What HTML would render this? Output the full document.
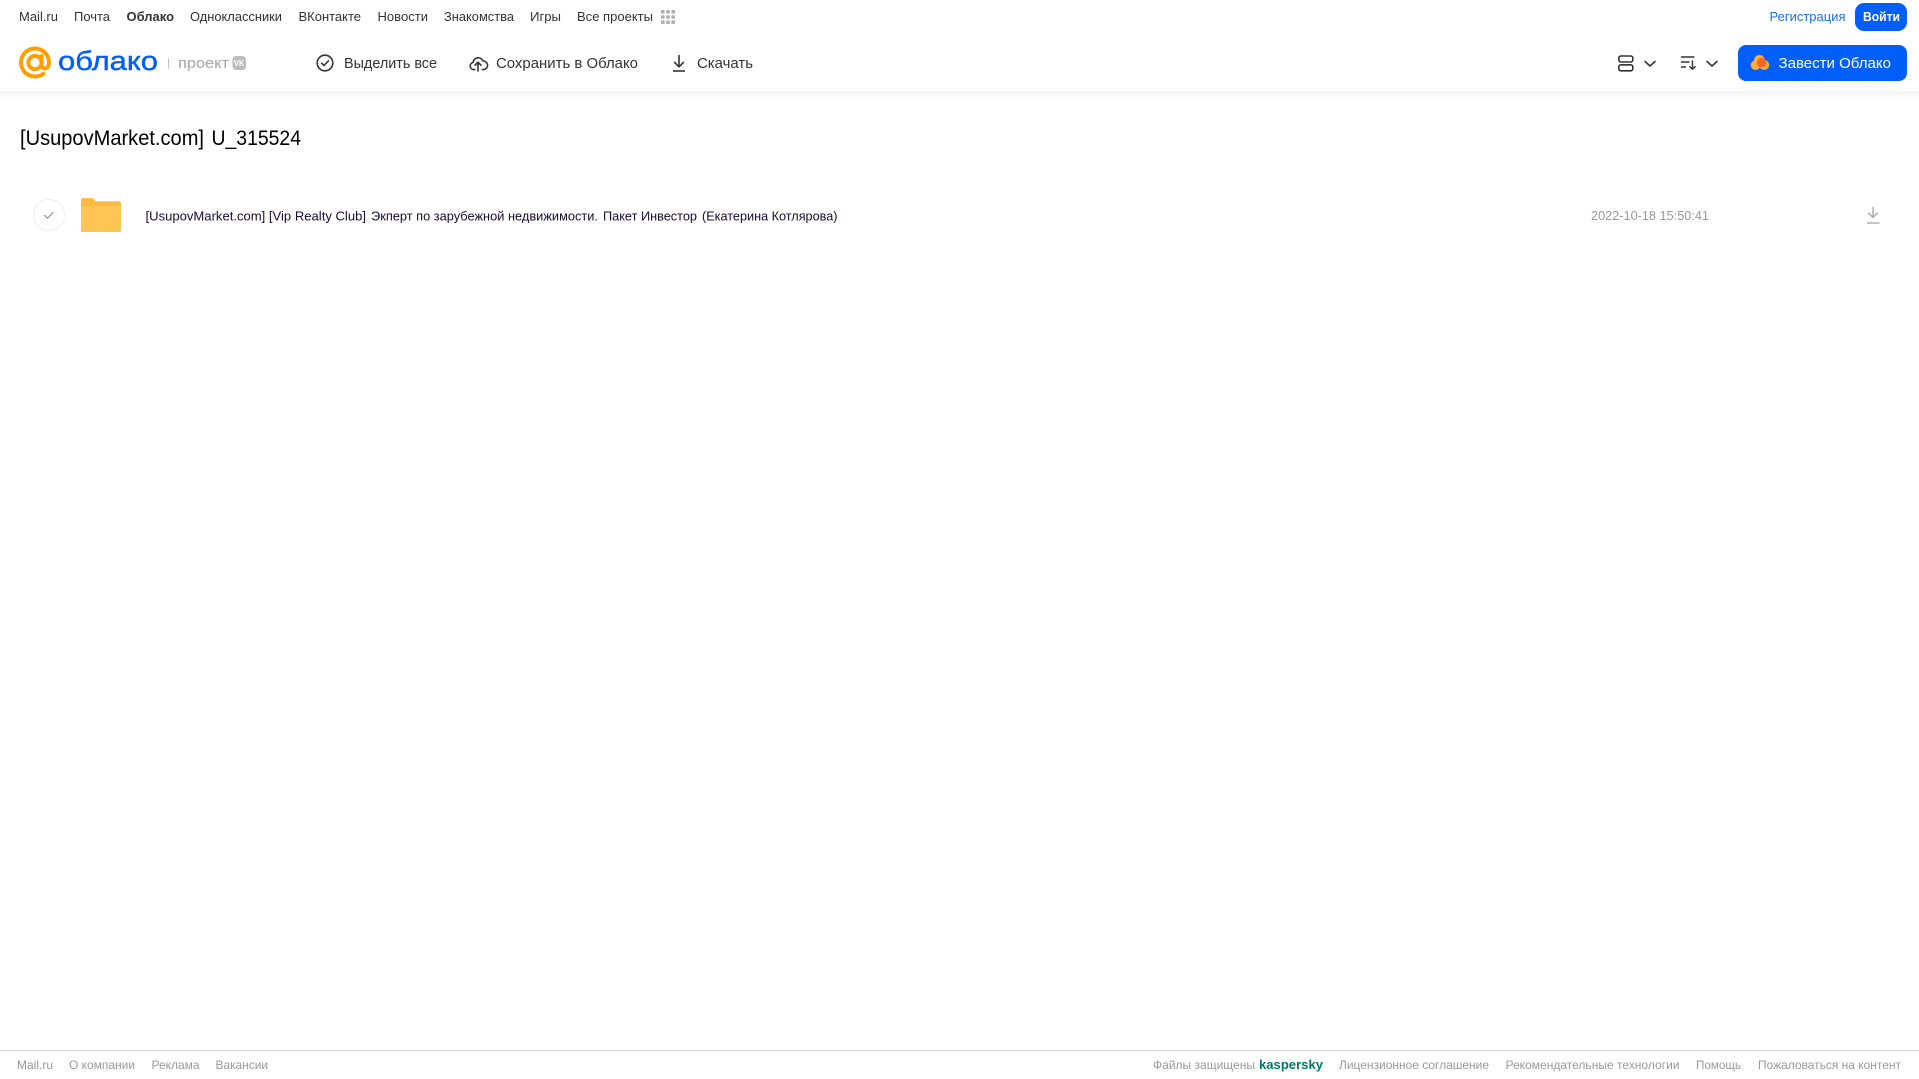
<!DOCTYPE html>
<html lang="ru">
<head>
<meta charset="utf-8">
<title>Облако</title>
<style>
html,body{margin:0;padding:0;background:#fff;width:1919px;height:1079px;overflow:hidden}
svg{position:absolute;left:0;top:0;display:block}
text{font-family:"Liberation Sans","DejaVu Sans",sans-serif}
.n{font-size:13px;fill:#333}
.t{font-size:15px;fill:#333}
.f{font-size:12px;fill:#999}
</style>
</head>
<body>
<svg width="1919" height="1079" viewBox="0 0 1919 1079" xmlns="http://www.w3.org/2000/svg">
<defs>
<linearGradient id="sh" x1="0" y1="0" x2="0" y2="1"><stop offset="0" stop-color="#f3f3f3"/><stop offset="1" stop-color="#fff"/></linearGradient>
</defs>
<rect x="0" y="91" width="1919" height="10" fill="url(#sh)"/>

<!-- top nav -->
<text class="n" x="19" y="21" textLength="39" lengthAdjust="spacingAndGlyphs">Mail.ru</text>
<text class="n" x="74" y="21" textLength="36" lengthAdjust="spacingAndGlyphs">Почта</text>
<text class="n" x="126.5" y="21" textLength="47.5" lengthAdjust="spacingAndGlyphs" style="font-weight:700">Облако</text>
<text class="n" x="190" y="21" textLength="92" lengthAdjust="spacingAndGlyphs">Одноклассники</text>
<text class="n" x="298.5" y="21" textLength="62.5" lengthAdjust="spacingAndGlyphs">ВКонтакте</text>
<text class="n" x="377.5" y="21" textLength="50.5" lengthAdjust="spacingAndGlyphs">Новости</text>
<text class="n" x="444" y="21" textLength="70" lengthAdjust="spacingAndGlyphs">Знакомства</text>
<text class="n" x="530" y="21" textLength="31" lengthAdjust="spacingAndGlyphs">Игры</text>
<text class="n" x="577" y="21" textLength="76" lengthAdjust="spacingAndGlyphs">Все проекты</text>
<g fill="#b0b0b0">
<rect x="661" y="10" width="3.6" height="3.6" rx=".8"/><rect x="666.2" y="10" width="3.6" height="3.6" rx=".8"/><rect x="671.4" y="10" width="3.6" height="3.6" rx=".8"/>
<rect x="661" y="15.2" width="3.6" height="3.6" rx=".8"/><rect x="666.2" y="15.2" width="3.6" height="3.6" rx=".8"/><rect x="671.4" y="15.2" width="3.6" height="3.6" rx=".8"/>
<rect x="661" y="20.4" width="3.6" height="3.6" rx=".8"/><rect x="666.2" y="20.4" width="3.6" height="3.6" rx=".8"/><rect x="671.4" y="20.4" width="3.6" height="3.6" rx=".8"/>
</g>
<text class="n" x="1769.5" y="21" textLength="76" lengthAdjust="spacingAndGlyphs" style="fill:#1a6ff0">Регистрация</text>
<rect x="1855" y="3" width="52" height="28" rx="9" fill="#005ff9"/>
<text class="n" x="1863" y="21" textLength="37" lengthAdjust="spacingAndGlyphs" style="fill:#fff;font-weight:700">Войти</text>

<!-- logo -->
<g fill="none" stroke="#ff9e00" stroke-width="4">
<circle cx="35" cy="62.5" r="6.6"/>
<path d="M41.6 56v8.5c0 5.6 7.4 5.2 7.4-2.2a14 14 0 1 0-5.6 11.4" stroke-linecap="round"/>
</g>
<text x="58" y="70" font-size="27" fill="#005ff9" stroke="#005ff9" stroke-width=".4" textLength="100" lengthAdjust="spacingAndGlyphs">облако</text>
<rect x="168" y="58" width="1" height="11" fill="#c4c4c4"/>
<text x="178" y="68" font-size="15" fill="#aeaeae" stroke="#aeaeae" stroke-width=".15" textLength="51" lengthAdjust="spacingAndGlyphs">проект</text>
<rect x="232.5" y="56" width="13.5" height="14" rx="3.5" fill="#bcbcbc"/>
<text x="234" y="66" font-size="8" fill="#fff" style="font-weight:700" textLength="10.5" lengthAdjust="spacingAndGlyphs">VK</text>

<!-- toolbar -->
<g fill="none" stroke="#333" stroke-width="1.6" stroke-linecap="round" stroke-linejoin="round">
<circle cx="325" cy="63" r="7.8"/>
<path d="M321.6 63.2l2.4 2.3 4.4-4.6"/>
<path d="M474.8 69.6h-1.2a3.6 3.6 0 0 1-.6-7.1 5.2 5.2 0 0 1 10-1.5 4.3 4.3 0 0 1 .6 8.6h-1.2"/>
<path d="M478 71v-8M475 65.2l3-3 3 3"/>
<path d="M679 55.5v11M674.6 62.4l4.4 4.4 4.4-4.4"/>
<path d="M673 71h12" stroke-linecap="butt"/>
<rect x="1618.8" y="56" width="14" height="6" rx="2"/>
<rect x="1618.8" y="64.8" width="14" height="6" rx="2"/>
<path d="M1645 61.5l5 4.5 5-4.5"/>
<path d="M1707 61.5l5 4.5 5-4.5"/>
</g>
<g fill="none" stroke="#333" stroke-width="1.4" stroke-linecap="round" stroke-linejoin="round">
<path d="M1681.5 57h12.5M1681.5 62h7.5M1681.5 67h4"/>
<path d="M1692.5 61v8M1689.8 66.6l2.7 2.7 2.7-2.7"/>
</g>
<text class="t" x="344" y="68" textLength="93" lengthAdjust="spacingAndGlyphs">Выделить все</text>
<text class="t" x="496" y="68" textLength="142" lengthAdjust="spacingAndGlyphs">Сохранить в Облако</text>
<text class="t" x="697" y="68" textLength="56" lengthAdjust="spacingAndGlyphs">Скачать</text>

<!-- CTA -->
<rect x="1738" y="45" width="169" height="36" rx="8" fill="#005ff9"/>
<g fill="#ffae38">
<circle cx="1755.6" cy="65.2" r="4.8"/>
<circle cx="1759.5" cy="60.4" r="5.4"/>
<circle cx="1764.2" cy="65" r="5"/>
</g>
<circle cx="1761.6" cy="62.6" r="4.7" fill="#f9662a"/>
<text class="t" x="1778.5" y="68" textLength="112.5" lengthAdjust="spacingAndGlyphs" style="fill:#fff">Завести Облако</text>

<!-- title -->
<text x="20" y="145" font-size="21" fill="#000" textLength="184" lengthAdjust="spacingAndGlyphs">[UsupovMarket.com]</text>
<text x="211.5" y="145" font-size="21" fill="#000" textLength="89.5" lengthAdjust="spacingAndGlyphs">U_315524</text>

<!-- row -->
<circle cx="49" cy="215" r="15.5" fill="#fff" stroke="#eee" stroke-width="1"/>
<path d="M44.6 215.4l3 2.8 5.4-5.6" fill="none" stroke="#999" stroke-width="1.3" stroke-linecap="round" stroke-linejoin="round"/>
<path d="M81 200a2 2 0 0 1 2-2h8.5c1.8 0 2.6 1 3.5 2.6.3.5.7.8 1.3.8H119a2 2 0 0 1 2 2v10H81z" fill="#fdbb45"/>
<path d="M81 206h40v24a2 2 0 0 1-2 2H83a2 2 0 0 1-2-2z" fill="#ffc552"/>
<g font-size="13" fill="#1c0a2b">
<text x="145.5" y="220.5" textLength="220.5" lengthAdjust="spacingAndGlyphs">[UsupovMarket.com] [Vip Realty Club]</text>
<text x="371" y="220.5" textLength="227" lengthAdjust="spacingAndGlyphs">Экперт по зарубежной недвижимости.</text>
<text x="603" y="220.5" textLength="94" lengthAdjust="spacingAndGlyphs">Пакет Инвестор</text>
<text x="702" y="220.5" textLength="135.5" lengthAdjust="spacingAndGlyphs">(Екатерина Котлярова)</text>
</g>
<text x="1591" y="220" font-size="13" fill="#999" textLength="118" lengthAdjust="spacingAndGlyphs">2022-10-18 15:50:41</text>
<g fill="none" stroke="#aaa" stroke-width="1.4" stroke-linecap="round" stroke-linejoin="round">
<path d="M1873 207.5v10M1868.5 213l4.5 4.5 4.5-4.5"/>
<path d="M1867 223h12.5" stroke-linecap="butt"/>
</g>

<!-- footer -->
<rect x="0" y="1050" width="1919" height="1" fill="#d9d9d9"/>
<text class="f" x="17" y="1069" textLength="36" lengthAdjust="spacingAndGlyphs">Mail.ru</text>
<text class="f" x="69" y="1069" textLength="66" lengthAdjust="spacingAndGlyphs">О компании</text>
<text class="f" x="151.5" y="1069" textLength="48" lengthAdjust="spacingAndGlyphs">Реклама</text>
<text class="f" x="215.5" y="1069" textLength="52.5" lengthAdjust="spacingAndGlyphs">Вакансии</text>
<text class="f" x="1153" y="1069" textLength="102" lengthAdjust="spacingAndGlyphs">Файлы защищены</text>
<text x="1259" y="1069" font-size="13" fill="#007a63" style="font-weight:700" textLength="64" lengthAdjust="spacingAndGlyphs">kaspersky</text>
<text class="f" x="1339" y="1069" textLength="150" lengthAdjust="spacingAndGlyphs">Лицензионное соглашение</text>
<text class="f" x="1505.5" y="1069" textLength="174" lengthAdjust="spacingAndGlyphs">Рекомендательные технологии</text>
<text class="f" x="1696" y="1069" textLength="45" lengthAdjust="spacingAndGlyphs">Помощь</text>
<text class="f" x="1758" y="1069" textLength="143" lengthAdjust="spacingAndGlyphs">Пожаловаться на контент</text>
</svg>
</body>
</html>
